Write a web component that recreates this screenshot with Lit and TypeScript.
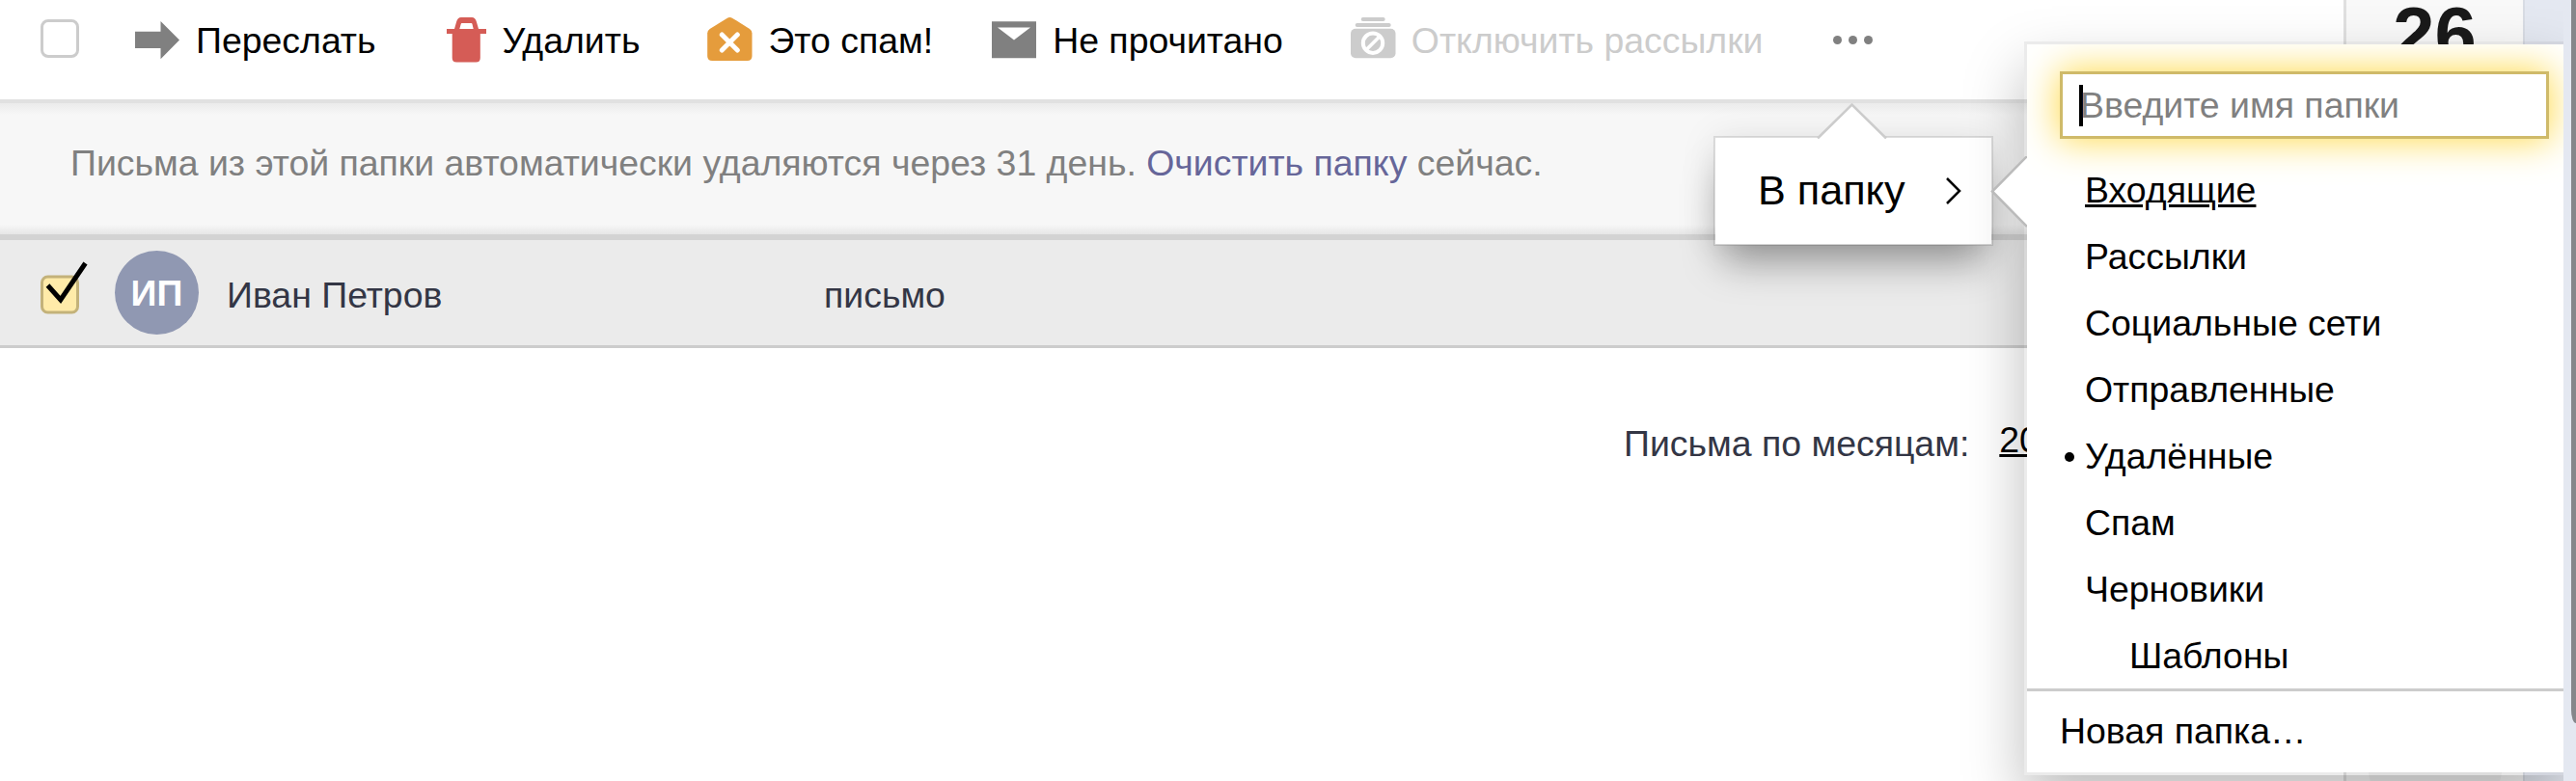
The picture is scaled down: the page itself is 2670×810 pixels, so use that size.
import { LitElement, css, html, svg, nothing } from "lit";
import { customElement, property } from "lit/decorators.js";
import { classMap } from "lit/directives/class-map.js";

interface Folder {
  name: string;
  hovered?: boolean;
  current?: boolean;
  nested?: boolean;
}

const FOLDERS: Folder[] = [
  { name: "Входящие", hovered: true },
  { name: "Рассылки" },
  { name: "Социальные сети" },
  { name: "Отправленные" },
  { name: "Удалённые", current: true },
  { name: "Спам" },
  { name: "Черновики" },
  { name: "Шаблоны", nested: true },
];

const ICONS = {
  forward: svg`<path fill="#808080" d="M0 14.700h26.500V4L46 23.600L26.500 43.300V32H0z"/>`,
  trash: svg`
    <path fill="#d55c56" fill-rule="evenodd" d="M0 12h8l2-7q1.300-5 5-5h11q3.700 0 5 5l2 7h8v5h-6.200v25q0 4.500-4.500 4.500h-20q-4.600 0-4.600-4.500V17H0zM13.300 12h14.400l-1.200-5q-.2-1-1-1h-9.800q-.8 0-1 1z"/>
  `,
  spam: svg`
    <path fill="#e59c3c" d="M20.500 .9q2.900-1.700 5.800 0L44 12q2.500 1.700 2.500 4.500V40q0 5-5 5H5.200q-5 0-5-5V16.500q0-2.800 2.500-4.500z"/>
    <path fill="none" stroke="#fff" stroke-width="5" stroke-linecap="round" d="M15.300 18l16 16M31.300 18l-16 16"/>
  `,
  unread: svg`<path fill="#808080" d="M0 4.300h46v38H0z"/><path fill="#fff" d="M6 10.500h34L23 23.500z"/>`,
  unsubscribe: svg`
    <rect x="10.700" y="0" width="25" height="4" rx="2" fill="#ccc"/>
    <rect x="4.700" y="5.900" width="37" height="4" rx="2" fill="#ccc"/>
    <rect x="0" y="11.800" width="46.500" height="30.500" rx="5" fill="#ccc"/>
    <circle cx="23" cy="26.700" r="10.200" fill="none" stroke="#fff" stroke-width="4"/>
    <path stroke="#fff" stroke-width="3.500" d="M30 19.700L16 33.700"/>
  `,
};

@customElement("mail-action")
export class MailAction extends LitElement {
  @property({ type: String }) icon: keyof typeof ICONS = "forward";
  @property({ type: String }) label = "";
  @property({ type: Number }) iconWidth = 47;
  @property({ type: Boolean, reflect: true }) disabled = false;

  static styles = css`
    :host {
      display: flex;
      align-items: center;
      height: 48px;
      white-space: nowrap;
      color: #000;
    }
    :host([disabled]) {
      color: #ccc;
    }
    svg {
      display: block;
      flex: none;
      margin-right: 16px;
    }
  `;

  render() {
    return html`
      <svg width=${this.iconWidth} height="48" viewBox="0 0 ${this.iconWidth} 48">${ICONS[this.icon]}</svg>
      <span>${this.label}</span>
    `;
  }
}

@customElement("folder-menu")
export class FolderMenu extends LitElement {
  @property({ attribute: false }) folders: Folder[] = [];

  static styles = css`
    :host {
      display: block;
      box-sizing: border-box;
      height: 100%;
      background: #fff;
      overflow: hidden;
    }
    .body {
      display: flex;
      flex-direction: column;
      height: 671px;
      padding: 28px 15px 0 34px;
      border-bottom: 3px solid #ccc;
      box-sizing: border-box;
    }
    .field {
      flex: none;
      display: flex;
      align-items: center;
      height: 70px;
      box-sizing: border-box;
      padding-left: 17px;
      border: 3px solid #cfba69;
      background: #fff;
      color: #808080;
      box-shadow: 0 0 38px 2px #ffdb4d;
    }
    .caret {
      width: 4px;
      height: 43px;
      margin-right: -3px;
      background: #000;
    }
    .list {
      margin: 18.500px 0 0;
      padding: 0 0 0 26px;
      list-style: none;
    }
    .item {
      position: relative;
      height: 69.120px;
      line-height: 69.120px;
    }
    .hovered {
      text-decoration: underline;
      text-decoration-thickness: 3px;
    }
    .nested {
      padding-left: 46px;
    }
    .current::before {
      content: "";
      position: absolute;
      left: -21px;
      top: 30px;
      width: 10px;
      height: 10px;
      border-radius: 50%;
      background: #000;
    }
    .create {
      height: 84px;
      line-height: 83px;
      padding-left: 34px;
    }
  `;

  render() {
    return html`
      <div class="body">
        <div class="field"><span class="caret"></span>Введите имя папки</div>
        <ul class="list">
          ${this.folders.map(
            (f) => html`
              <li class=${classMap({ item: true, current: !!f.current, nested: !!f.nested })}>
                <span class=${f.hovered ? "hovered" : nothing}>${f.name}</span>
              </li>
            `,
          )}
        </ul>
      </div>
      <div class="create">Новая папка…</div>
    `;
  }
}

@customElement("app-root")
export class AppRoot extends LitElement {
  static styles = css`
    :host {
      display: block;
      position: relative;
      width: 2670px;
      height: 810px;
      overflow: hidden;
      background: #fff;
      font: 37.440px/44px "Liberation Sans", Arial, sans-serif;
      color: #000;
    }
    .page {
      display: flex;
      height: 100%;
    }
    .main {
      width: 2429px;
      flex: none;
    }
    .toolbar {
      display: flex;
      align-items: flex-start;
      height: 103px;
      padding: 18px 0 0 42px;
      box-sizing: border-box;
    }
    .checkbox {
      width: 40px;
      height: 40px;
      margin: 2px 58px 0 0;
      box-sizing: border-box;
      border: 3px solid #ccc;
      border-radius: 8px;
    }
    mail-action {
      margin-right: 73px;
    }
    .delete,
    .read {
      margin-right: 70px;
    }
    .spam {
      margin-right: 61px;
    }
    .dots {
      display: flex;
      gap: 7px;
      margin-top: 19px;
    }
    .dots i {
      width: 9px;
      height: 9px;
      border-radius: 50%;
      background: #808080;
    }
    .notice {
      height: 146px;
      padding: 40px 0 0 73px;
      box-sizing: border-box;
      border-top: 4px solid #e1e1e1;
      border-bottom: 6px solid #d3d3d3;
      background: linear-gradient(#ebebeb, #f7f7f7 12px, #f7f7f7 126px, #e6e6e6);
      color: #808080;
    }
    .notice a {
      color: #669;
    }
    .message {
      display: flex;
      align-items: center;
      height: 112px;
      box-sizing: border-box;
      border-bottom: 3px solid #ccc;
      background: #ebebeb;
      color: #333645;
    }
    .check {
      width: 52px;
      height: 60px;
      margin-left: 40px;
      overflow: visible;
    }
    .avatar {
      display: flex;
      align-items: center;
      justify-content: center;
      width: 87px;
      height: 87px;
      margin-left: 27px;
      border-radius: 50%;
      background: #9098b2;
      color: #fff;
      font-weight: bold;
    }
    .sender {
      width: 648px;
      padding: 5px 0 0 29px;
      box-sizing: border-box;
    }
    .subject {
      padding-top: 5px;
    }
    .months {
      display: flex;
      gap: 31px;
      padding: 77px 0 0 1683px;
      color: #333645;
    }
    .months a {
      margin-top: -4px;
      color: #000;
      text-decoration: underline;
      text-decoration-thickness: 3px;
    }
    .calendar {
      display: flex;
      flex-direction: column;
      align-items: center;
      justify-content: space-between;
      width: 188px;
      flex: none;
      box-sizing: border-box;
      border-left: 3px solid #e0e0e0;
      border-right: 2px solid #d8dce4;
      background: #f9f9f9;
      color: #1a1a1a;
      font-size: 77.760px;
      font-weight: bold;
      line-height: 70px;
    }
    .service {
      width: 140px;
      height: 140px;
      margin-bottom: -50px;
      border-radius: 50%;
      background: #f0f0f0;
    }
    .backdrop {
      flex: 1;
      background: #e4e8f1;
    }
    .submenu {
      position: absolute;
      left: 1776px;
      top: 141px;
      width: 290px;
      height: 114px;
      box-sizing: border-box;
      border: 2px solid rgba(0, 0, 0, 0.100);
      background: #fff;
      background-clip: padding-box;
      box-shadow:
        0 26px 42px -10px rgba(0, 0, 0, 0.360),
        0 0 36px rgba(0, 0, 0, 0.080);
    }
    .row {
      display: flex;
      align-items: center;
      height: 100%;
      padding: 0 30px 0 44px;
      font-size: 43.200px;
      justify-content: space-between;
    }
    .row span {
      padding-bottom: 3px;
    }
    .row svg {
      display: block;
    }
    .notch-up {
      position: absolute;
      left: 1883px;
      top: 107px;
    }
    .popup {
      position: absolute;
      left: 2098px;
      top: 43px;
      width: 559px;
      height: 761px;
      box-sizing: border-box;
      border: 3px solid rgba(0, 0, 0, 0.080);
      border-right: 0;
      background-clip: padding-box;
      box-shadow: 0 29px 58px rgba(0, 0, 0, 0.260);
    }
    .notch-left {
      position: absolute;
      left: 2063px;
      top: 162px;
    }
    .edge {
      position: absolute;
      left: 2657px;
      top: 0;
      width: 13px;
      height: 810px;
      background: #e4e8f1;
    }
    .thumb {
      position: absolute;
      right: 0;
      top: 0;
      width: 5px;
      height: 750px;
      border-bottom-left-radius: 5px 14px;
      background: #86878b;
    }
  `;

  render() {
    return html`
      <div class="page">
        <div class="main">
          <div class="toolbar">
            <span class="checkbox"></span>
            <mail-action icon="forward" label="Переслать"></mail-action>
            <mail-action class="delete" icon="trash" label="Удалить" .iconWidth=${42}></mail-action>
            <mail-action class="spam" icon="spam" label="Это спам!"></mail-action>
            <mail-action class="read" icon="unread" label="Не прочитано"></mail-action>
            <mail-action icon="unsubscribe" label="Отключить рассылки" disabled></mail-action>
            <span class="dots"><i></i><i></i><i></i></span>
          </div>
          <div class="notice">
            Письма из этой папки автоматически удаляются через 31 день. <a>Очистить папку</a> сейчас.
          </div>
          <div class="message">
            <svg class="check" viewBox="0 0 52 60">
              <rect x="3.500" y="13" width="37" height="37" rx="6" fill="#ffeba9" stroke="#c3b27a" stroke-width="3" />
              <path d="M9.500 22L22.800 37L48.500 -1" fill="none" stroke="#000" stroke-width="5" />
            </svg>
            <span class="avatar">ИП</span>
            <span class="sender">Иван Петров</span>
            <span class="subject">письмо</span>
          </div>
          <div class="months"><span>Письма по месяцам:</span><a>2018</a></div>
        </div>
        <div class="calendar">
          <span>26</span>
          <span class="service"></span>
        </div>
        <div class="backdrop"></div>
      </div>
      <div class="submenu">
        <div class="row">
          <span>В папку</span>
          <svg width="18" height="30" viewBox="0 0 18 30">
            <path d="M2 2l13 13L2 28" fill="none" stroke="#000" stroke-width="2.500" />
          </svg>
        </div>
      </div>
      <svg class="notch-up" width="74" height="37" viewBox="0 0 74 37">
        <path d="M1 36.500L36.500 1.500L72 36.500" fill="#fff" stroke="#ccc" stroke-width="2.500" />
      </svg>
      <div class="popup"><folder-menu .folders=${FOLDERS}></folder-menu></div>
      <svg class="notch-left" width="38" height="74" viewBox="0 0 38 74">
        <path d="M38 0L2 36.500L38 73" fill="#fff" stroke="#bbb" stroke-width="2.500" />
      </svg>
      <div class="edge"><div class="thumb"></div></div>
    `;
  }
}

declare global {
  interface HTMLElementTagNameMap {
    "app-root": AppRoot;
    "folder-menu": FolderMenu;
    "mail-action": MailAction;
  }
}
